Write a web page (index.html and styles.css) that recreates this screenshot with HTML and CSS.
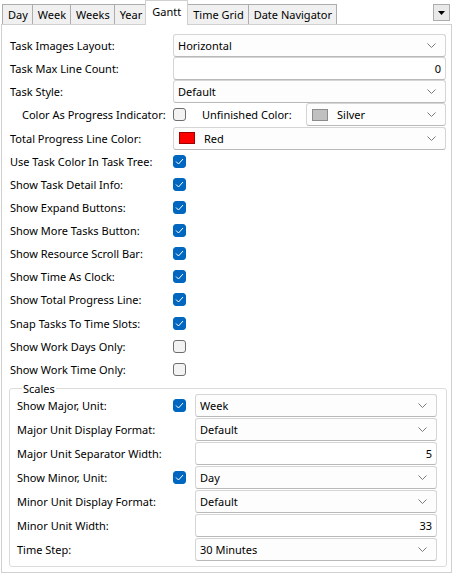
FILE: index.html
```html
<!DOCTYPE html>
<html>
<head>
<meta charset="utf-8">
<link rel="stylesheet" href="styles.css">
</head>
<body>
<div class="header">
  <div class="tabs">
    <div class="tab">Day</div>
    <div class="tab">Week</div>
    <div class="tab">Weeks</div>
    <div class="tab">Year</div>
    <div class="tab active">Gantt</div>
    <div class="tab">Time Grid</div>
    <div class="tab">Date Navigator</div>
  </div>
  <div class="menu-btn"><svg width="7" height="4" viewBox="0 0 7 4"><path d="M0 0H7L3.5 4Z" fill="#000"/></svg></div>
</div>
<div class="panel">
  <div class="form">
    <div class="label">Task Images Layout:</div>
    <div class="combo"><span>Horizontal</span><svg class="chev" width="9" height="5" viewBox="0 0 9 5"><path d="M0.5 0.5L4.5 4.5L8.5 0.5" fill="none" stroke="#7a7a7a" stroke-width="1"/></svg></div>

    <div class="label">Task Max Line Count:</div>
    <div class="edit">0</div>

    <div class="label">Task Style:</div>
    <div class="combo"><span>Default</span><svg class="chev" width="9" height="5" viewBox="0 0 9 5"><path d="M0.5 0.5L4.5 4.5L8.5 0.5" fill="none" stroke="#7a7a7a" stroke-width="1"/></svg></div>

    <div class="label indent">Color As Progress Indicator:</div>
    <div class="split">
      <span class="check"></span>
      <span class="sublabel">Unfinished Color:</span>
      <div class="combo narrow"><span class="swatch silver"></span><span>Silver</span><svg class="chev" width="9" height="5" viewBox="0 0 9 5"><path d="M0.5 0.5L4.5 4.5L8.5 0.5" fill="none" stroke="#7a7a7a" stroke-width="1"/></svg></div>
    </div>

    <div class="label">Total Progress Line Color:</div>
    <div class="combo"><span class="swatch red"></span><span>Red</span><svg class="chev" width="9" height="5" viewBox="0 0 9 5"><path d="M0.5 0.5L4.5 4.5L8.5 0.5" fill="none" stroke="#7a7a7a" stroke-width="1"/></svg></div>

    <div class="label">Use Task Color In Task Tree:</div>
    <div class="cell"><span class="check on"><svg width="9" height="7" viewBox="0 0 9 7"><path d="M1 3.5L3.5 6L8 1" fill="none" stroke="#fff" stroke-width="1"/></svg></span></div>

    <div class="label">Show Task Detail Info:</div>
    <div class="cell"><span class="check on"><svg width="9" height="7" viewBox="0 0 9 7"><path d="M1 3.5L3.5 6L8 1" fill="none" stroke="#fff" stroke-width="1"/></svg></span></div>

    <div class="label">Show Expand Buttons:</div>
    <div class="cell"><span class="check on"><svg width="9" height="7" viewBox="0 0 9 7"><path d="M1 3.5L3.5 6L8 1" fill="none" stroke="#fff" stroke-width="1"/></svg></span></div>

    <div class="label">Show More Tasks Button:</div>
    <div class="cell"><span class="check on"><svg width="9" height="7" viewBox="0 0 9 7"><path d="M1 3.5L3.5 6L8 1" fill="none" stroke="#fff" stroke-width="1"/></svg></span></div>

    <div class="label">Show Resource Scroll Bar:</div>
    <div class="cell"><span class="check on"><svg width="9" height="7" viewBox="0 0 9 7"><path d="M1 3.5L3.5 6L8 1" fill="none" stroke="#fff" stroke-width="1"/></svg></span></div>

    <div class="label">Show Time As Clock:</div>
    <div class="cell"><span class="check on"><svg width="9" height="7" viewBox="0 0 9 7"><path d="M1 3.5L3.5 6L8 1" fill="none" stroke="#fff" stroke-width="1"/></svg></span></div>

    <div class="label">Show Total Progress Line:</div>
    <div class="cell"><span class="check on"><svg width="9" height="7" viewBox="0 0 9 7"><path d="M1 3.5L3.5 6L8 1" fill="none" stroke="#fff" stroke-width="1"/></svg></span></div>

    <div class="label">Snap Tasks To Time Slots:</div>
    <div class="cell"><span class="check on"><svg width="9" height="7" viewBox="0 0 9 7"><path d="M1 3.5L3.5 6L8 1" fill="none" stroke="#fff" stroke-width="1"/></svg></span></div>

    <div class="label">Show Work Days Only:</div>
    <div class="cell"><span class="check"></span></div>

    <div class="label">Show Work Time Only:</div>
    <div class="cell"><span class="check"></span></div>
  </div>

  <fieldset class="group">
    <legend>Scales</legend>
    <div class="gform">
      <div class="label">Show Major, Unit:</div>
      <div class="cell"><span class="check on"><svg width="9" height="7" viewBox="0 0 9 7"><path d="M1 3.5L3.5 6L8 1" fill="none" stroke="#fff" stroke-width="1"/></svg></span></div>
      <div class="combo"><span>Week</span><svg class="chev" width="9" height="5" viewBox="0 0 9 5"><path d="M0.5 0.5L4.5 4.5L8.5 0.5" fill="none" stroke="#7a7a7a" stroke-width="1"/></svg></div>

      <div class="label">Major Unit Display Format:</div>
      <div class="cell"></div>
      <div class="combo"><span>Default</span><svg class="chev" width="9" height="5" viewBox="0 0 9 5"><path d="M0.5 0.5L4.5 4.5L8.5 0.5" fill="none" stroke="#7a7a7a" stroke-width="1"/></svg></div>

      <div class="label">Major Unit Separator Width:</div>
      <div class="cell"></div>
      <div class="edit">5</div>

      <div class="label">Show Minor, Unit:</div>
      <div class="cell"><span class="check on"><svg width="9" height="7" viewBox="0 0 9 7"><path d="M1 3.5L3.5 6L8 1" fill="none" stroke="#fff" stroke-width="1"/></svg></span></div>
      <div class="combo"><span>Day</span><svg class="chev" width="9" height="5" viewBox="0 0 9 5"><path d="M0.5 0.5L4.5 4.5L8.5 0.5" fill="none" stroke="#7a7a7a" stroke-width="1"/></svg></div>

      <div class="label">Minor Unit Display Format:</div>
      <div class="cell"></div>
      <div class="combo"><span>Default</span><svg class="chev" width="9" height="5" viewBox="0 0 9 5"><path d="M0.5 0.5L4.5 4.5L8.5 0.5" fill="none" stroke="#7a7a7a" stroke-width="1"/></svg></div>

      <div class="label">Minor Unit Width:</div>
      <div class="cell"></div>
      <div class="edit">33</div>

      <div class="label">Time Step:</div>
      <div class="cell"></div>
      <div class="combo"><span>30 Minutes</span><svg class="chev" width="9" height="5" viewBox="0 0 9 5"><path d="M0.5 0.5L4.5 4.5L8.5 0.5" fill="none" stroke="#7a7a7a" stroke-width="1"/></svg></div>
    </div>
  </fieldset>
</div>
</body>
</html>
```

FILE: styles.css
```css
* { box-sizing: border-box; }
html, body {
  margin: 0;
  padding: 0;
  background: #fff;
}
body {
  width: 453px;
  height: 574px;
  overflow: hidden;
  font-family: "Noto Sans", "Liberation Sans", sans-serif;
  font-size: 11px;
  color: #000;
}
.header {
  height: 24px;
  display: flex;
  justify-content: space-between;
  align-items: flex-start;
  padding: 0 3px 0 2px;
}
.tabs {
  display: flex;
  align-items: flex-end;
  height: 25px;
  position: relative;
  z-index: 2;
}
.tab {
  height: 20px;
  margin-bottom: 1px;
  padding: 0 4px 0 5px;
  border: 1px solid #adadad;
  border-bottom: none;
  background: #f0f0f0;
  margin-right: -1px;
  line-height: 19px;
  white-space: nowrap;
}
.tab.active {
  height: 25px;
  margin-bottom: 0;
  background: #fff;
  border-color: #d0d0d0;
  padding: 0 6px;
  line-height: 22px;
  position: relative;
  z-index: 3;
  margin-left: -1px;
}
.menu-btn {
  margin-top: 4px;
  width: 17px;
  height: 17px;
  border: 1px solid #adadad;
  background: #e9e9e9;
  display: flex;
  align-items: center;
  justify-content: center;
}
.panel {
  margin: 0 1px;
  height: 549px;
  border: 1px solid #d0d0d0;
  background: #fff;
  padding: 9px 5px 0 8px;
}
.form {
  display: grid;
  grid-template-columns: 163px 1fr;
  grid-auto-rows: 23.14px;
  align-items: center;
}
.label {
  white-space: nowrap;
}
.label.indent { padding-left: 12px; }
.cell {
  display: flex;
  align-items: center;
  height: 100%;
}
.combo, .edit {
  height: 23px;
  border: 1px solid #d5d5d5;
  border-bottom-color: #b9b9b9;
  border-radius: 3px;
  background: #fdfdfd;
  display: flex;
  align-items: center;
  padding: 0 9px 0 4px;
}
.combo span { white-space: nowrap; }
.combo .chev { margin-left: auto; }
.edit {
  justify-content: flex-end;
  padding-right: 4px;
  background: #fff;
}
.split {
  display: flex;
  align-items: center;
  height: 100%;
}
.sublabel {
  margin-left: 16px;
  width: 104px;
  white-space: nowrap;
}
.combo.narrow { flex: 1; }
.swatch {
  width: 16px;
  height: 12px;
  margin-right: 9px;
  margin-left: 1px;
  border: 1px solid #8c8c8c;
}
.swatch.red { background: #ff0000; border-color: #a00000; }
.swatch.silver { background: #c0c0c0; border-color: #8c8c8c; }
.check {
  width: 13px;
  height: 13px;
  border-radius: 3px;
  border: 1px solid #6e6e6e;
  background: #f3f3f3;
  display: inline-flex;
  align-items: center;
  justify-content: center;
}
.check.on {
  border-color: #0067c0;
  background: #0067c0;
}
.group {
  margin: 1px -1px 0 -1px;
  padding: 0 9px 5px 7px;
  border: 1px solid #dcdcdc;
  border-radius: 3px;
  min-width: 0;
}
.group legend {
  padding: 0 1px;
  margin-left: 5px;
  margin-bottom: -2px;
  line-height: 14px;
}
.gform {
  display: grid;
  grid-template-columns: 156px 22px 1fr;
  grid-auto-rows: 23px;
  row-gap: 1px;
  align-items: center;
}
```
